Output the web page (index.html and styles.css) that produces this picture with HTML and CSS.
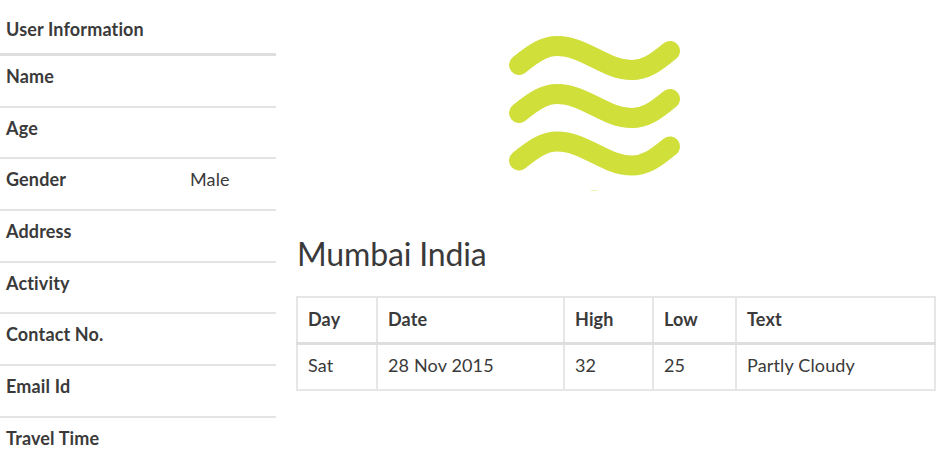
FILE: index.html
```html
<!DOCTYPE html>
<html lang="en">
<head>
<meta charset="utf-8">
<title>User Information</title>
<link rel="stylesheet" href="styles.css">
</head>
<body>
<div class="page">
  <aside class="side">
    <table class="info">
      <colgroup><col class="c-label"><col></colgroup>
      <thead><tr><th colspan="2">User Information</th></tr></thead>
      <tbody>
        <tr><th>Name</th><td></td></tr>
        <tr><th>Age</th><td></td></tr>
        <tr><th>Gender</th><td>Male</td></tr>
        <tr><th>Address</th><td></td></tr>
        <tr><th>Activity</th><td></td></tr>
        <tr><th>Contact No.</th><td></td></tr>
        <tr><th>Email Id</th><td></td></tr>
        <tr><th>Travel Time</th><td></td></tr>
      </tbody>
    </table>
  </aside>
  <main class="main">
    <div class="icon-wrap">
      <svg class="icon" width="180" height="170" viewBox="505 25 180 170" aria-hidden="true">
        <g fill="none" stroke="#d0df39" stroke-width="20" stroke-linecap="round">
          <path d="M519 65C535 52 545 46 557 46C585 46 605 70 632 70C648 70 658 60 670 51"/>
          <path d="M519 113C535 100 545 94 557 94C585 94 605 118 632 118C648 118 658 108 670 99"/>
          <path d="M519 160.500C535 147.500 545 141.500 557 141.500C585 141.500 605 165.500 632 165.500C648 165.500 658 155.500 670 146.500"/>
        </g>
        <rect x="591" y="190" width="6" height="1" fill="#eef3b5"/>
      </svg>
    </div>
    <h1 class="city">Mumbai India</h1>
    <table class="forecast">
      <colgroup><col class="c-day"><col class="c-date"><col class="c-high"><col class="c-low"><col></colgroup>
      <thead><tr><th>Day</th><th>Date</th><th>High</th><th>Low</th><th>Text</th></tr></thead>
      <tbody><tr><td>Sat</td><td>28 Nov 2015</td><td>32</td><td>25</td><td>Partly Cloudy</td></tr></tbody>
    </table>
  </main>
</div>
</body>
</html>
```
FILE: styles.css
```css
* { box-sizing: border-box; }
html, body { height: 100%; overflow: hidden; }
body {
  margin: 0;
  background: #fff;
  color: #3a3a3a;
  font-family: Lato, "Open Sans", sans-serif;
  font-size: 18px;
  letter-spacing: 0.15px;
  line-height: 24px;
}
.page { display: flex; align-items: flex-start; }
.side { width: 276px; flex: none; }
.main { width: 640px; margin-left: 20px; flex: none; }
table { border-collapse: collapse; border-spacing: 0; width: 100%; table-layout: fixed; }
th { font-weight: 700; text-align: left; }
.c-label { width: 184px; }
.info th, .info td { padding: 8px 6px 17.67px; border-top: 2px solid #e4e4e4; vertical-align: top; font-weight: 400; }
.info th { font-weight: 700; }
.info thead th { padding: 17px 6px 12px; border-top: 0; border-bottom: 3px solid #dedede; }
.info tbody tr:first-child th, .info tbody tr:first-child td { border-top: 0; }
.icon-wrap { display: flex; justify-content: center; width: 598px; height: 210px; padding-top: 25px; }
.icon { display: block; }
.city { margin: 26px 0 25px; padding-left: 1px; font-size: 32px; font-weight: 400; letter-spacing: -0.15px; line-height: 1.1; }
.forecast th, .forecast td { padding: 9px 10px 11px; border: 2px solid #e6e6e6; vertical-align: top; }
.forecast td { padding: 8px 10px 12px; }
.forecast thead th { border-bottom: 3px solid #dedede; }
.c-day { width: 80px; }
.c-date { width: 187px; }
.c-high { width: 89px; }
.c-low { width: 83px; }
```
